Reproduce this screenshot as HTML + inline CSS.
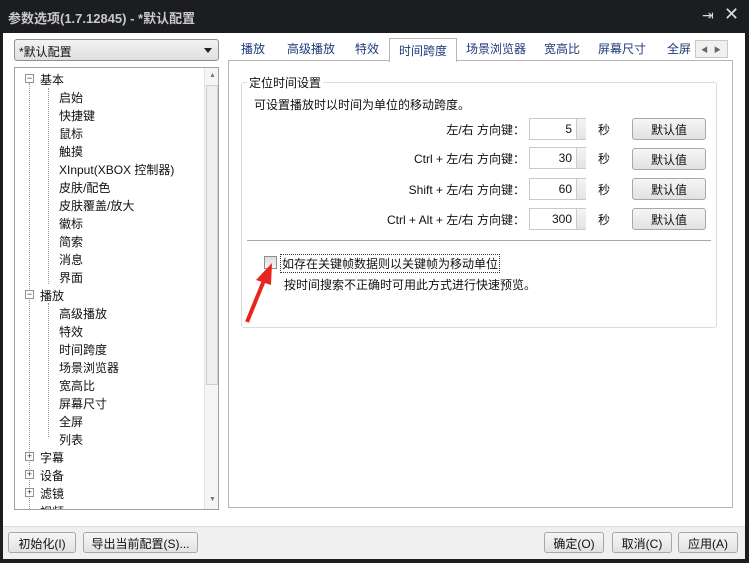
<!DOCTYPE html>
<html><head><meta charset="utf-8"><style>
*{box-sizing:border-box;margin:0;padding:0}
body{width:749px;height:563px;background:#1b1d21;font-family:"Liberation Sans","Noto Sans CJK SC",sans-serif;font-size:12px;color:#111;position:relative;overflow:hidden}
.a{position:absolute}
.title{left:8px;top:8px;color:#c8c8c8;font-size:13px;font-weight:bold}
.client{left:3px;top:33px;width:742px;height:526px;background:#fff}
.bottom{left:3px;top:526px;width:742px;height:33px;background:#f0f0f0;border-top:1px solid #dcdcdc}
.combo{left:14px;top:39px;width:205px;height:22px;border:1px solid #8e8f8f;border-radius:3px;background:linear-gradient(#f2f2f2,#e0e0e0);padding:3px 4px;font-size:12px}
.tree{left:14px;top:67px;width:205px;height:443px;border:1px solid #a0a0a0;overflow:hidden}
.sb{left:189px;top:0;width:15px;height:441px;background:#f5f5f5;border-left:1px solid #e2e2e2}
.it{position:absolute;white-space:nowrap;font-size:12px}
.box{position:absolute;width:9px;height:9px;border:1px solid #919191;background:#fff;font-size:9px;line-height:7px;text-align:center;color:#333}
.tab{position:absolute;top:40px;color:#1f3a7a;font-size:12px}
.panel{left:228px;top:60px;width:505px;height:448px;border:1px solid #b6b6b6}
.sel{left:389px;top:38px;width:68px;height:24px;border:1px solid #b6b6b6;border-bottom:none;background:#fff;text-align:center;padding-top:3px;color:#1f3a7a}
.grp{left:241px;top:82px;width:476px;height:246px;border:1px solid #dcdcdc;border-radius:3px}
.lbl{position:absolute;right:224px;text-align:right;white-space:nowrap}
.inp{position:absolute;left:529px;width:57px;height:22px;border:1px solid #c9c9c9;text-align:right;padding:3px 13px 0 0}
.spn{position:absolute;left:576px;width:10px;height:20px;border-left:1px solid #ccc;background:linear-gradient(#f4f4f4,#e4e4e4)}
.btn{position:absolute;height:22px;border:1px solid #a8a8a8;border-radius:3px;background:linear-gradient(#f6f6f6,#e2e2e2);text-align:center;padding-top:2px;font-size:12px}
</style></head><body>
<div class="a title">参数选项(1.7.12845) - *默认配置</div>
<div class="a" style="left:702px;top:7px;color:#ddd;font-size:14px">⇥</div>
<div class="a" style="left:724px;top:4px;color:#ddd;font-size:18px">✕</div>
<div class="a client"></div>
<div class="a combo">*默认配置<span style="position:absolute;right:6px;top:8px;border:4px solid transparent;border-top:5px solid #222"></span></div>
<div class="a tree">
<div class="a" style="left:14px;top:15px;height:428px;border-left:1px dotted #999"></div>
<div class="a" style="left:33px;top:20px;height:196px;border-left:1px dotted #999"></div>
<div class="a" style="left:33px;top:235px;height:134px;border-left:1px dotted #999"></div>
<div class="box" style="left:10px;top:6px">−</div><div class="it" style="left:25px;top:3px">基本</div>
<div class="box" style="left:10px;top:222px">−</div><div class="it" style="left:25px;top:219px">播放</div>
<div class="box" style="left:10px;top:384px">+</div><div class="it" style="left:25px;top:381px">字幕</div>
<div class="box" style="left:10px;top:402px">+</div><div class="it" style="left:25px;top:399px">设备</div>
<div class="box" style="left:10px;top:420px">+</div><div class="it" style="left:25px;top:417px">滤镜</div>
<div class="it" style="left:25px;top:435px">视频</div>
<div class="it" style="left:44px;top:21px">启始</div>
<div class="it" style="left:44px;top:39px">快捷键</div>
<div class="it" style="left:44px;top:57px">鼠标</div>
<div class="it" style="left:44px;top:75px">触摸</div>
<div class="it" style="left:44px;top:93px">XInput(XBOX 控制器)</div>
<div class="it" style="left:44px;top:111px">皮肤/配色</div>
<div class="it" style="left:44px;top:129px">皮肤覆盖/放大</div>
<div class="it" style="left:44px;top:147px">徽标</div>
<div class="it" style="left:44px;top:165px">简索</div>
<div class="it" style="left:44px;top:183px">消息</div>
<div class="it" style="left:44px;top:201px">界面</div>
<div class="it" style="left:44px;top:237px">高级播放</div>
<div class="it" style="left:44px;top:255px">特效</div>
<div class="it" style="left:44px;top:273px">时间跨度</div>
<div class="it" style="left:44px;top:291px">场景浏览器</div>
<div class="it" style="left:44px;top:309px">宽高比</div>
<div class="it" style="left:44px;top:327px">屏幕尺寸</div>
<div class="it" style="left:44px;top:345px">全屏</div>
<div class="it" style="left:44px;top:363px">列表</div>
<div class="a sb"><div class="a" style="left:4px;top:4px;font-size:7px;color:#777">▲</div><div class="a" style="left:1px;top:17px;width:12px;height:300px;border:1px solid #cfcfcf;background:#eee"></div><div class="a" style="left:4px;top:428px;font-size:7px;color:#777">▼</div></div>
</div>
<div class="a panel"></div>
<div class="tab" style="left:241px">播放</div>
<div class="tab" style="left:287px">高级播放</div>
<div class="tab" style="left:355px">特效</div>
<div class="a sel">时间跨度</div>
<div class="tab" style="left:466px">场景浏览器</div>
<div class="tab" style="left:544px">宽高比</div>
<div class="tab" style="left:598px">屏幕尺寸</div>
<div class="tab" style="left:667px">全屏</div>
<div class="a" style="left:695px;top:40px;width:33px;height:18px;border:1px solid #c8c8c8;background:#f0f0f0;font-size:7px;color:#666;padding:4px 0 0 5px">◀ &nbsp; ▶</div>
<div class="a grp"></div>
<div class="a" style="left:247px;top:74px;background:#fff;padding:0 2px">定位时间设置</div>
<div class="a" style="left:254px;top:96px">可设置播放时以时间为单位的移动跨度。</div>
<div class="lbl" style="top:121px">左/右 方向键：</div>
<div class="lbl" style="top:150px">Ctrl + 左/右 方向键：</div>
<div class="lbl" style="top:181px">Shift + 左/右 方向键：</div>
<div class="lbl" style="top:211px">Ctrl + Alt + 左/右 方向键：</div>
<div class="inp" style="top:118px">5</div><div class="spn" style="top:119px"></div>
<div class="inp" style="top:147px">30</div><div class="spn" style="top:148px"></div>
<div class="inp" style="top:178px">60</div><div class="spn" style="top:179px"></div>
<div class="inp" style="top:208px">300</div><div class="spn" style="top:209px"></div>
<div class="a" style="left:598px;top:121px">秒</div>
<div class="a" style="left:598px;top:150px">秒</div>
<div class="a" style="left:598px;top:181px">秒</div>
<div class="a" style="left:598px;top:211px">秒</div>
<div class="btn" style="left:632px;top:118px;width:74px">默认值</div>
<div class="btn" style="left:632px;top:148px;width:74px">默认值</div>
<div class="btn" style="left:632px;top:178px;width:74px">默认值</div>
<div class="btn" style="left:632px;top:208px;width:74px">默认值</div>
<div class="a" style="left:247px;top:240px;width:464px;border-top:1px solid #a8a8a8"></div>
<div class="a" style="left:264px;top:256px;width:13px;height:13px;border:1px solid #8e8f8f;background:linear-gradient(#dedede,#f6f6f6)"></div>
<div class="a" style="left:280px;top:254px;border:1px dotted #333;padding:0 1px">如存在关键帧数据则以关键帧为移动单位</div>
<div class="a" style="left:284px;top:276px">按时间搜索不正确时可用此方式进行快速预览。</div>
<svg class="a" style="left:240px;top:258px" width="40" height="70"><path d="M7 64 L25 20" stroke="#e8261f" stroke-width="4"/><path d="M32 5 L16 22 L31 27 Z" fill="#e8261f"/></svg>
<div class="a bottom"></div>
<div class="btn" style="left:8px;top:532px;width:68px;height:21px;padding-top:2px">初始化(I)</div>
<div class="btn" style="left:83px;top:532px;width:115px;height:21px;padding-top:2px">导出当前配置(S)...</div>
<div class="btn" style="left:544px;top:532px;width:60px;height:21px;padding-top:2px">确定(O)</div>
<div class="btn" style="left:612px;top:532px;width:60px;height:21px;padding-top:2px">取消(C)</div>
<div class="btn" style="left:678px;top:532px;width:60px;height:21px;padding-top:2px">应用(A)</div>
</body></html>
